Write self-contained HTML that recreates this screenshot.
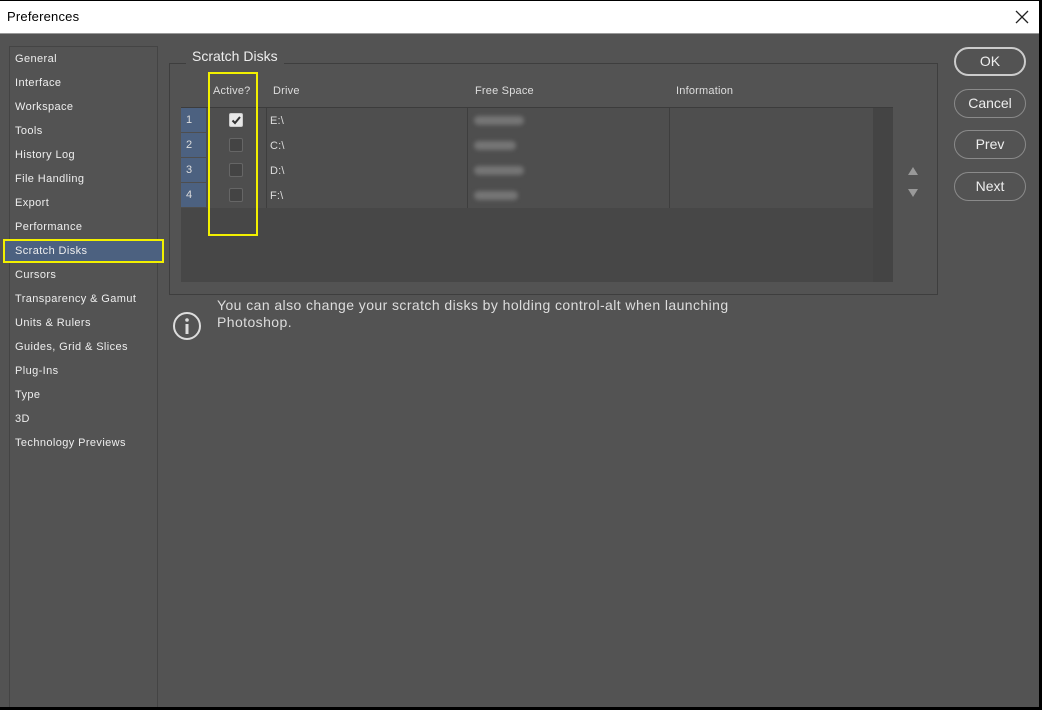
<!DOCTYPE html>
<html><head><meta charset="utf-8"><style>
*{margin:0;padding:0;box-sizing:border-box}
body{width:1042px;height:710px;background:#000;position:relative;overflow:hidden;font-family:"Liberation Sans",sans-serif}
.abs{position:absolute}
#title{left:0;top:1px;width:1039px;height:33px;background:#fff;border-bottom:1px solid #999}
#title span{position:absolute;left:7px;top:8px;font-size:13px;color:#000;letter-spacing:0.2px}
#main{left:0;top:34px;width:1039px;height:673px;background:#535353}
#side{left:9px;top:46px;width:149px;height:661px;border:1px solid #444;border-bottom:none}
.si{position:absolute;left:15px;font-size:11px;color:#eee;letter-spacing:0.4px}
.lbl{font-size:11px;color:#ddd;position:absolute;letter-spacing:0.2px}
#grp{left:169px;top:63px;width:769px;height:232px;border:1px solid #3e3e3e}
#tbl{left:181px;top:107px;width:712px;height:175px;background:#474747;border-top:1px solid #3c3c3c}
.row{position:absolute;left:0;width:692px;height:25px;background:#4e4e4e}
.num{position:absolute;left:0;top:0;width:25px;height:24px;background:#4c6180;color:#ddd;font-size:11px;padding:6px 0 0 5px}
.cb{position:absolute;left:48px;top:5px;width:14px;height:14px;border:1px solid #666;border-radius:2px;background:#444}
.blur{position:absolute;left:293px;top:8px;width:50px;height:9px;background:#757575;border-radius:5px;filter:blur(2px)}
.vd{position:absolute;top:0;width:1px;height:25px;background:#3e3e3e}
.btn{position:absolute;left:954px;width:72px;height:29px;border:1px solid #8a8a8a;border-radius:15px;color:#eee;font-size:14px;text-align:center;line-height:27px}
</style></head><body>
<div id="title" class="abs"><span>Preferences</span><svg style="position:absolute;left:1015px;top:9px" width="14" height="14"><path d="M1 1L13 13M13 1L1 13" stroke="#222" stroke-width="1.3"/></svg></div>
<div id="main" class="abs"></div>
<div id="side" class="abs"></div>
<div class="abs" style="left:3px;top:239px;width:161px;height:24px;background:#4c6180;border:2px solid #f2f000"></div>
<div class="si" style="top:53px">General</div>
<div class="si" style="top:77px">Interface</div>
<div class="si" style="top:101px">Workspace</div>
<div class="si" style="top:125px">Tools</div>
<div class="si" style="top:149px">History Log</div>
<div class="si" style="top:173px">File Handling</div>
<div class="si" style="top:197px">Export</div>
<div class="si" style="top:221px">Performance</div>
<div class="si" style="top:245px">Scratch Disks</div>
<div class="si" style="top:269px">Cursors</div>
<div class="si" style="top:293px">Transparency &amp; Gamut</div>
<div class="si" style="top:317px">Units &amp; Rulers</div>
<div class="si" style="top:341px">Guides, Grid &amp; Slices</div>
<div class="si" style="top:365px">Plug-Ins</div>
<div class="si" style="top:389px">Type</div>
<div class="si" style="top:413px">3D</div>
<div class="si" style="top:437px">Technology Previews</div>

<div id="grp" class="abs"></div>
<div class="abs" style="left:186px;top:48px;padding:0 6px;background:#535353;color:#eee;font-size:14px">Scratch Disks</div>

<div class="lbl" style="left:213px;top:85px">Active?</div>
<div class="lbl" style="left:273px;top:85px">Drive</div>
<div class="lbl" style="left:475px;top:85px">Free Space</div>
<div class="lbl" style="left:676px;top:85px">Information</div>

<div id="tbl" class="abs">
 <div class="abs" style="left:692px;top:0;width:20px;height:174px;background:#444"></div>
 <div class="row" style="top:0"><div class="num">1</div><div class="cb" style="background:#e8e8e8;border-color:#ccc"><svg width="12" height="12" style="position:absolute;left:0;top:0"><path d="M2.5 6.5L5 9L10 3" stroke="#333" stroke-width="2" fill="none"/></svg></div><div class="lbl" style="left:89px;top:7px">E:\</div><div class="vd" style="left:85px"></div><div class="vd" style="left:286px"></div><div class="vd" style="left:488px"></div><div class="blur"></div></div>
 <div class="row" style="top:25px"><div class="num">2</div><div class="cb"></div><div class="lbl" style="left:89px;top:7px">C:\</div><div class="vd" style="left:85px"></div><div class="vd" style="left:286px"></div><div class="vd" style="left:488px"></div><div class="blur" style="width:42px"></div></div>
 <div class="row" style="top:50px"><div class="num">3</div><div class="cb"></div><div class="lbl" style="left:89px;top:7px">D:\</div><div class="vd" style="left:85px"></div><div class="vd" style="left:286px"></div><div class="vd" style="left:488px"></div><div class="blur"></div></div>
 <div class="row" style="top:75px"><div class="num">4</div><div class="cb"></div><div class="lbl" style="left:89px;top:7px">F:\</div><div class="vd" style="left:85px"></div><div class="vd" style="left:286px"></div><div class="vd" style="left:488px"></div><div class="blur" style="width:44px"></div></div>
</div>
<div class="abs" style="left:208px;top:72px;width:50px;height:164px;border:2px solid #f2f000"></div>

<svg class="abs" style="left:907px;top:165px" width="12" height="34"><path d="M1 10L6 2L11 10Z M1 24L11 24L6 32Z" fill="#999"/></svg>

<svg class="abs" style="left:172px;top:311px" width="30" height="30"><circle cx="15" cy="15" r="13" fill="none" stroke="#ddd" stroke-width="2"/><rect x="13.5" y="13" width="3" height="10" fill="#ddd"/><circle cx="15" cy="9" r="1.8" fill="#ddd"/></svg>
<div class="abs" style="left:217px;top:297px;font-size:14px;color:#ddd;line-height:17px;letter-spacing:0.42px">You can also change your scratch disks by holding control-alt when launching<br>Photoshop.</div>

<div class="btn" style="top:47px;border:2px solid #ccc;line-height:25px">OK</div>
<div class="btn" style="top:89px">Cancel</div>
<div class="btn" style="top:130px">Prev</div>
<div class="btn" style="top:172px">Next</div>
</body></html>
